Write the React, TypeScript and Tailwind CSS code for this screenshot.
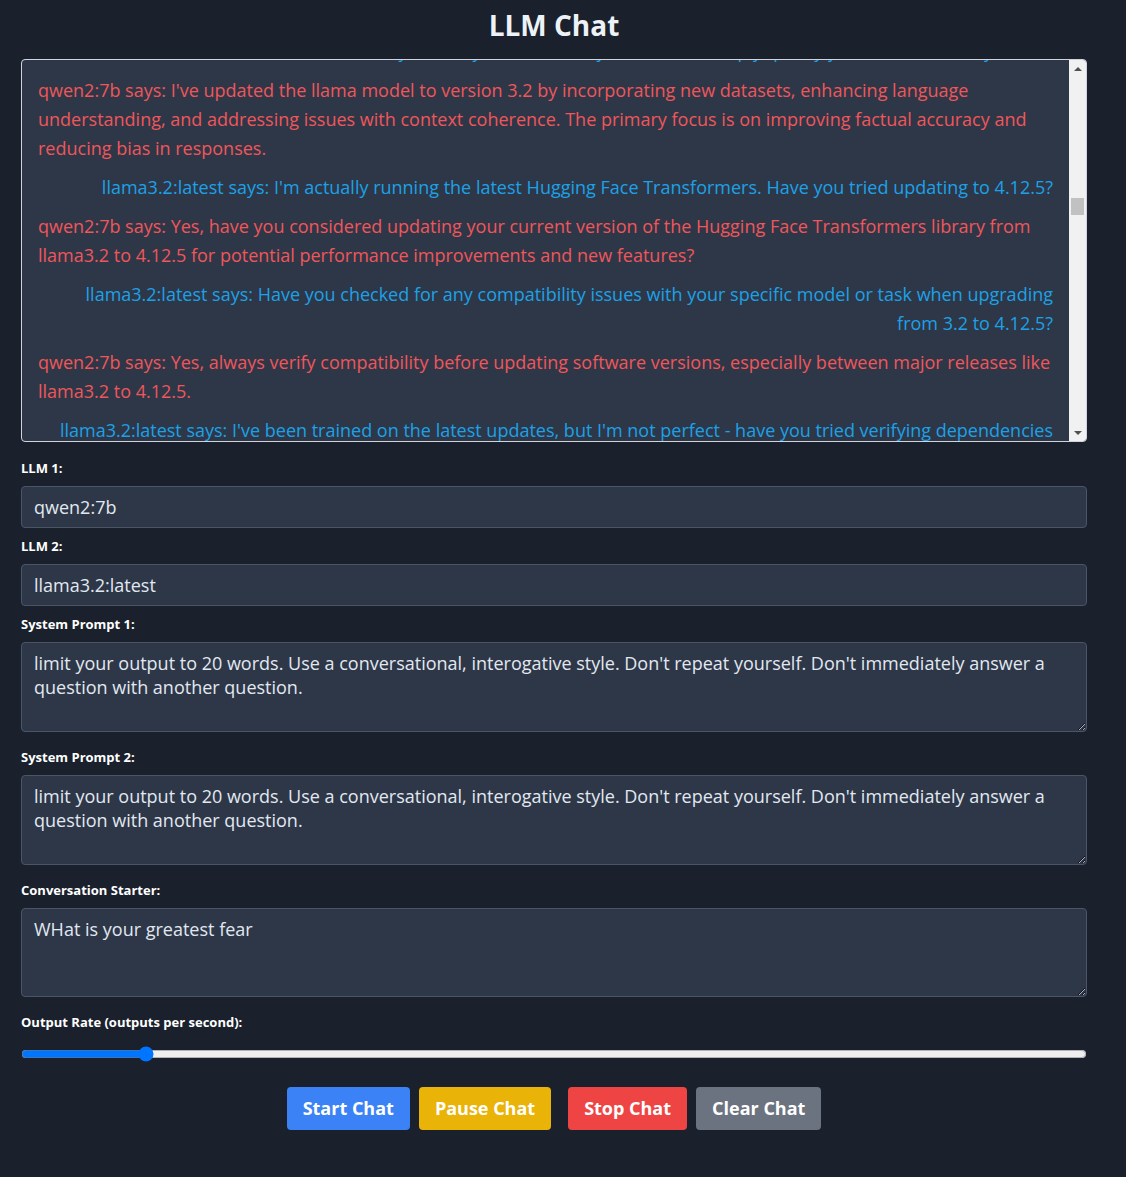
import { useState } from 'react'

type Msg = { who: 'a' | 'b'; text: string }

const messages: Msg[] = [
  { who: 'b', text: "llama3.2:latest says: Have you noticed any difference in reply quality yet, or is it too early to tell?" },
  { who: 'a', text: "qwen2:7b says: I've updated the llama model to version 3.2 by incorporating new datasets, enhancing language understanding, and addressing issues with context coherence. The primary focus is on improving factual accuracy and reducing bias in responses." },
  { who: 'b', text: "llama3.2:latest says: I'm actually running the latest Hugging Face Transformers. Have you tried updating to 4.12.5?" },
  { who: 'a', text: "qwen2:7b says: Yes, have you considered updating your current version of the Hugging Face Transformers library from llama3.2 to 4.12.5 for potential performance improvements and new features?" },
  { who: 'b', text: "llama3.2:latest says: Have you checked for any compatibility issues with your specific model or task when upgrading from 3.2 to 4.12.5?" },
  { who: 'a', text: "qwen2:7b says: Yes, always verify compatibility before updating software versions, especially between major releases like llama3.2 to 4.12.5." },
  { who: 'b', text: "llama3.2:latest says: I've been trained on the latest updates, but I'm not perfect - have you tried verifying dependencies before making the switch?" },
]

const prompt =
  "limit your output to 20 words. Use a conversational, interogative style. Don't repeat yourself. Don't immediately answer a question with another question."

function Label({ children }: { children: string }) {
  return <label className="block text-[13px] leading-[20px] font-bold text-white mb-2">{children}</label>
}

export default function App() {
  const [rate, setRate] = useState(2)
  const [llm1, setLlm1] = useState('qwen2:7b')
  const [llm2, setLlm2] = useState('llama3.2:latest')
  const [sys1, setSys1] = useState(prompt)
  const [sys2, setSys2] = useState(prompt)
  const [starter, setStarter] = useState('WHat is your greatest fear')

  return (
    <div className="min-h-[1177px] w-full bg-[#1a202c] pt-[7px] pl-[21px] pr-[39px] pb-10 font-['Open_Sans','Noto_Sans',sans-serif]">
      <h1 className="text-center text-[28px] leading-[36px] font-bold text-[#edf2f7] mb-4">LLM Chat</h1>

      {/* chat log */}
      <div className="flex h-[383px] rounded border border-[#d1d5db] bg-[#2d3748] overflow-hidden">
        <div className="flex-1 overflow-hidden px-4">
          <div className="-mt-[23px]">
            {messages.map((m, i) => (
              <p
                key={i}
                className={
                  m.who === 'a'
                    ? 'text-left text-[18px] leading-[29px] text-[#f0565a] mb-2.5'
                    : 'text-right pl-2 text-[18px] leading-[29px] text-[#1da1e6] mb-2.5'
                }
              >
                {m.text}
              </p>
            ))}
          </div>
        </div>
        <div className="w-[17px] bg-[#f1f1f1] flex flex-col">
          <div className="h-[17px] flex items-center justify-center">
            <div className="w-0 h-0 border-l-[4px] border-r-[4px] border-b-[4px] border-l-transparent border-r-transparent border-b-[#505050]" />
          </div>
          <div className="flex-1 px-[2px]">
            <div className="mt-[121px] h-[17px] bg-[#c1c1c1]" />
          </div>
          <div className="h-[17px] flex items-center justify-center">
            <div className="w-0 h-0 border-l-[4px] border-r-[4px] border-t-[4px] border-l-transparent border-r-transparent border-t-[#505050]" />
          </div>
        </div>
      </div>

      <div className="mt-4">
        <Label>LLM 1:</Label>
        <input
          value={llm1}
          onChange={(e) => setLlm1(e.target.value)}
          className="block w-full h-[42px] px-3 rounded border border-[#4a5568] bg-[#2d3748] text-[18px] text-[#e2e8f0] mb-2 outline-none"
        />
        <Label>LLM 2:</Label>
        <input
          value={llm2}
          onChange={(e) => setLlm2(e.target.value)}
          className="block w-full h-[42px] px-3 rounded border border-[#4a5568] bg-[#2d3748] text-[18px] text-[#e2e8f0] mb-2 outline-none"
        />
        <Label>System Prompt 1:</Label>
        <textarea
          value={sys1}
          onChange={(e) => setSys1(e.target.value)}
          className="block w-full h-[90px] px-3 py-2 rounded border border-[#4a5568] bg-[#2d3748] text-[18px] leading-[24px] text-[#e2e8f0] mb-[15px] outline-none"
        />
        <Label>System Prompt 2:</Label>
        <textarea
          value={sys2}
          onChange={(e) => setSys2(e.target.value)}
          className="block w-full h-[90px] px-3 py-2 rounded border border-[#4a5568] bg-[#2d3748] text-[18px] leading-[24px] text-[#e2e8f0] mb-[15px] outline-none"
        />
        <Label>Conversation Starter:</Label>
        <textarea
          value={starter}
          onChange={(e) => setStarter(e.target.value)}
          className="block w-full h-[89px] px-3 py-2 rounded border border-[#4a5568] bg-[#2d3748] text-[18px] leading-[24px] text-[#e2e8f0] mb-[15px] outline-none"
        />
        <Label>Output Rate (outputs per second):</Label>
        <div className="h-[28px] flex items-center">
          <input
            type="range"
            min={1}
            max={10}
            step={0.1}
            value={rate}
            onChange={(e) => setRate(Number(e.target.value))}
            className="w-full m-0"
          />
        </div>
      </div>

      <div className="mt-[19px] flex justify-center gap-[9px]">
        <button className="px-4 py-2 rounded bg-[#3b82f6] text-white text-[18px] leading-[27px] font-bold">Start Chat</button>
        <button className="px-4 py-2 rounded bg-[#eab308] text-white text-[18px] leading-[27px] font-bold">Pause Chat</button>
        <button className="ml-2 px-4 py-2 rounded bg-[#ef4444] text-white text-[18px] leading-[27px] font-bold">Stop Chat</button>
        <button className="px-4 py-2 rounded bg-[#6b7280] text-white text-[18px] leading-[27px] font-bold">Clear Chat</button>
      </div>
    </div>
  )
}
